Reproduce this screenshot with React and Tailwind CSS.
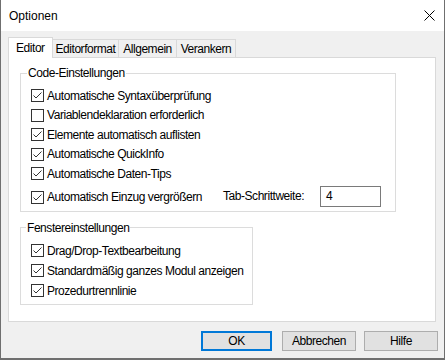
import React from 'react';

const font = { fontFamily: '"Liberation Sans", Arial, sans-serif' };

const Check = ({ checked }) => (
  <svg width="13" height="13" viewBox="0 0 13 13" className="shrink-0">
    <rect x="0.5" y="0.5" width="12" height="12" fill="#fff" stroke="#333" />
    {checked && (
      <polyline points="2.5,6.5 5,9 10.5,3.5" fill="none" stroke="#333" strokeWidth="1" />
    )}
  </svg>
);

const Row = ({ label, checked = true, h = 'h-[19.5px]' }) => (
  <div className={`flex items-center gap-[3px] ${h}`}>
    <Check checked={checked} />
    <span className="whitespace-nowrap">{label}</span>
  </div>
);

const Button = ({ children, primary, w }) => (
  <button
    className={`h-[20px] ${w} bg-[#e1e1e1] flex items-center justify-center ${
      primary ? 'border-2 border-[#0078d7]' : 'border border-[#adadad]'
    }`}
  >
    {children}
  </button>
);

export default function App() {
  return (
    <div
      className="w-[445px] h-[360px] bg-[#6f6f6f] text-[12px] leading-[16px] tracking-[-0.45px] text-black"
      style={font}
    >
      <div className="w-[445px] h-[359px] border-x border-b border-[#6f6f6f] bg-[#f0f0f0] flex flex-col">
        {/* Title bar */}
        <div className="h-[31px] bg-white flex items-center justify-between pl-[8px] pr-[9px]">
          <span className="tracking-normal">Optionen</span>
          <svg width="11" height="11" viewBox="0 0 11 11">
            <path d="M0.5 0.5 L10.5 10.5 M10.5 0.5 L0.5 10.5" stroke="#000" strokeWidth="1" />
          </svg>
        </div>

        <div className="pt-[6px] pl-[7px]">
          {/* Tabs */}
          <div className="flex items-end h-[20px]">
            <div className="relative z-10 h-[21px] w-[45px] mb-[-1px] bg-white border border-b-0 border-[#d9d9d9] pl-[7px] pt-[2px]">
              Editor
            </div>
            <div className="-ml-px h-[18px] w-[67px] border border-b-0 border-[#d9d9d9] flex items-center justify-center">
              Editorformat
            </div>
            <div className="-ml-px h-[18px] w-[59px] border border-b-0 border-[#d9d9d9] flex items-center justify-center">
              Allgemein
            </div>
            <div className="-ml-px h-[18px] w-[60px] border border-b-0 border-[#d9d9d9] flex items-center justify-center">
              Verankern
            </div>
          </div>

          {/* Panel */}
          <div className="w-[428px] h-[265px] bg-white border border-[#d9d9d9] pl-[11px] pt-[7px]">
            <fieldset className="w-[376px] border border-[#dcdcdc] pl-[10px] pt-[5px] pb-[2px]">
              <legend className="-ml-[4px] px-[1px]">Code-Einstellungen</legend>
              <Row label="Automatische Syntaxüberprüfung" />
              <Row label="Variablendeklaration erforderlich" checked={false} />
              <Row label="Elemente automatisch auflisten" />
              <Row label="Automatische QuickInfo" />
              <Row label="Automatische Daten-Tips" />
              <div className="flex items-center h-[25px]">
                <div className="w-[192px] flex items-center gap-[3px] pt-[2px]">
                  <Check checked />
                  <span className="whitespace-nowrap">Automatisch Einzug vergrößern</span>
                </div>
                <span className="w-[97px] whitespace-nowrap">Tab-Schrittweite:</span>
                <div className="w-[61px] h-[21px] border border-[#7a7a7a] bg-white pl-[5px] flex items-center">
                  4
                </div>
              </div>
            </fieldset>

            <fieldset className="mt-[8px] w-[233px] border border-[#dcdcdc] pl-[10px] pt-[5px] pb-[3px]">
              <legend className="-ml-[5px] px-[1px]">Fenstereinstellungen</legend>
              <Row label="Drag/Drop-Textbearbeitung" h="h-[20px]" />
              <Row label="Standardmäßig ganzes Modul anzeigen" h="h-[20px]" />
              <Row label="Prozedurtrennlinie" h="h-[20px]" />
            </fieldset>
          </div>
        </div>

        {/* Buttons */}
        <div className="flex justify-end pr-[6px] mt-[9px]">
          <Button primary w="w-[71px]">OK</Button>
          <div className="w-[10px]" />
          <Button w="w-[74px]">Abbrechen</Button>
          <div className="w-[8px]" />
          <Button w="w-[74px]">Hilfe</Button>
        </div>
      </div>
    </div>
  );
}
